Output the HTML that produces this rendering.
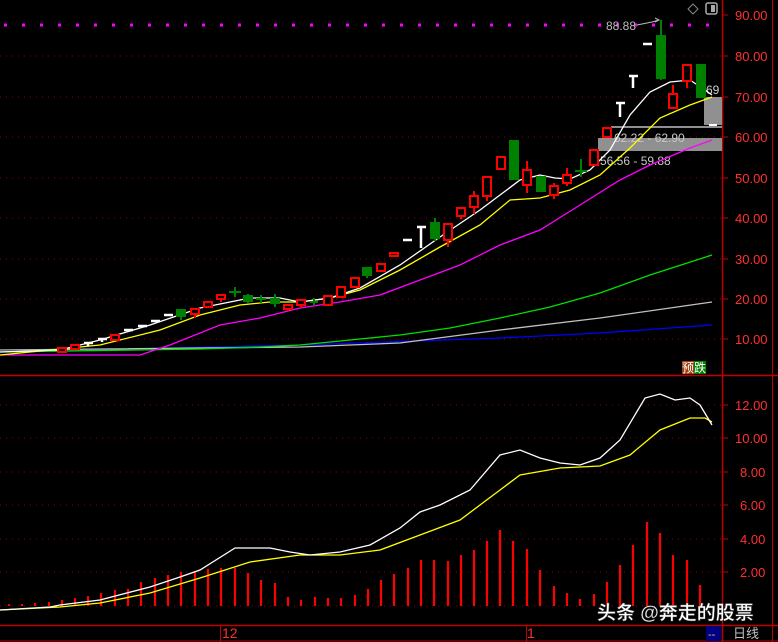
<!DOCTYPE html>
<html><head><meta charset="utf-8"><style>
html,body{margin:0;padding:0;background:#000;width:778px;height:642px;overflow:hidden}
svg{display:block}
text{font-family:"Liberation Sans","Noto Sans CJK SC",sans-serif}
</style></head><body>
<svg width="778" height="642" viewBox="0 0 778 642" xmlns="http://www.w3.org/2000/svg">
<rect width="778" height="642" fill="#000"/>
<g stroke="#8a0000" stroke-width="1" stroke-dasharray="1,5">
<line x1="0" y1="56" x2="722" y2="56"/><line x1="0" y1="97" x2="722" y2="97"/><line x1="0" y1="137" x2="722" y2="137"/><line x1="0" y1="178" x2="722" y2="178"/><line x1="0" y1="218" x2="722" y2="218"/><line x1="0" y1="259" x2="722" y2="259"/><line x1="0" y1="299" x2="722" y2="299"/><line x1="0" y1="339" x2="722" y2="339"/>
<line x1="0" y1="405" x2="722" y2="405"/><line x1="0" y1="438" x2="722" y2="438"/><line x1="0" y1="472" x2="722" y2="472"/><line x1="0" y1="505" x2="722" y2="505"/><line x1="0" y1="539" x2="722" y2="539"/><line x1="0" y1="572" x2="722" y2="572"/><line x1="0" y1="606" x2="722" y2="606"/>
</g>
<line x1="4" y1="25" x2="722" y2="25" stroke="#ff00ff" stroke-width="3" stroke-dasharray="3,15"/>
<line x1="0" y1="375.5" x2="778" y2="375.5" stroke="#c00000" stroke-width="1.5"/>
<line x1="722.5" y1="0" x2="722.5" y2="642" stroke="#c00000" stroke-width="1.5"/>
<line x1="772.5" y1="0" x2="772.5" y2="642" stroke="#c00000" stroke-width="1"/>
<line x1="0" y1="625.5" x2="778" y2="625.5" stroke="#c00000" stroke-width="1.5"/>
<line x1="0" y1="641" x2="778" y2="641" stroke="#c00000" stroke-width="1"/>
<g fill="#ff3030" font-size="13">
<text x="735" y="20">90.00</text><text x="735" y="61">80.00</text><text x="735" y="102">70.00</text><text x="735" y="142">60.00</text><text x="735" y="183">50.00</text><text x="735" y="223">40.00</text><text x="735" y="264">30.00</text><text x="735" y="304">20.00</text><text x="735" y="344">10.00</text>
<text x="735" y="410">12.00</text><text x="735" y="443">10.00</text><text x="740" y="477">8.00</text><text x="740" y="510">6.00</text><text x="740" y="544">4.00</text><text x="740" y="577">2.00</text>
<text x="222" y="638" font-size="14">12</text><text x="527" y="638" font-size="14">1</text>
</g>
<g stroke="#c00000" stroke-width="1">
<line x1="722" y1="15" x2="728" y2="15"/><line x1="722" y1="56" x2="728" y2="56"/><line x1="722" y1="97" x2="728" y2="97"/><line x1="722" y1="137" x2="728" y2="137"/><line x1="722" y1="178" x2="728" y2="178"/><line x1="722" y1="218" x2="728" y2="218"/><line x1="722" y1="259" x2="728" y2="259"/><line x1="722" y1="299" x2="728" y2="299"/><line x1="722" y1="339" x2="728" y2="339"/>
<line x1="722" y1="405" x2="728" y2="405"/><line x1="722" y1="438" x2="728" y2="438"/><line x1="722" y1="472" x2="728" y2="472"/><line x1="722" y1="505" x2="728" y2="505"/><line x1="722" y1="539" x2="728" y2="539"/><line x1="722" y1="572" x2="728" y2="572"/><line x1="722" y1="606" x2="728" y2="606"/>
<line x1="220.5" y1="625" x2="220.5" y2="642"/><line x1="526.5" y1="625" x2="526.5" y2="642"/>
</g>
<rect x="706" y="626" width="15" height="15" fill="#000080"/>
<text x="708" y="638" fill="#c0c0c0" font-size="11">--</text>
<text x="733" y="638" fill="#c0c0c0" font-size="13">日线</text>
<path d="M693 4 L698 9 L693 14 L688 9 Z" fill="none" stroke="#888" stroke-width="1"/>
<rect x="706" y="3" width="11" height="11" rx="2" fill="none" stroke="#aaa" stroke-width="1.5"/><rect x="711" y="5" width="4" height="7" fill="#aaa"/>
<rect x="598" y="138" width="124" height="13" fill="#909090"/>
<rect x="611" y="126" width="111" height="2" fill="#909090"/>
<rect x="704" y="97" width="18" height="28" fill="#909090"/>
<rect x="709" y="124" width="8" height="2" fill="#fff"/>
<text x="614" y="142" fill="#c8c8c8" font-size="12">62.22 - 62.90</text>
<text x="600" y="165" fill="#c8c8c8" font-size="12">56.56 - 59.88</text>
<text x="706" y="94" fill="#d0d0d0" font-size="12">69</text>
<text x="606" y="30" fill="#bbb" font-size="12">88.88</text>
<polyline points="637,25 652,22 659,20" fill="none" stroke="#bbb" stroke-width="1"/>
<path d="M655 18 L659 20 L655 22" fill="none" stroke="#bbb"/>
<g fill="none" stroke-width="1.3">
<polyline stroke="#0000ff" points="0,352 300,345 500,338 600,333 712,325"/>
<polyline stroke="#c0c0c0" points="0,350 300,347 400,343 500,330 600,318 712,302"/>
<polyline stroke="#00e000" points="0,352 200,349 260,347 300,345 350,340 400,335 450,328 500,318 550,307 600,293 650,275 712,255"/>
<polyline stroke="#ff00ff" points="0,355 140,355 170,345 220,325 260,318 300,308 340,302 380,295 420,280 460,265 500,245 540,230 580,205 620,180 650,165 690,148 712,140"/>
<polyline stroke="#ffff00" points="0,355 100,345 160,330 200,315 240,305 270,302 300,302 330,298 360,290 400,270 440,247 480,225 510,200 540,198 570,190 600,175 630,148 660,118 690,105 712,97"/>
<polyline stroke="#ffffff" points="0,352 60,350 100,340 150,325 200,308 250,298 280,298 300,302 330,298 360,288 400,265 440,237 480,210 500,195 520,180 540,175 555,178 570,179 590,170 610,150 630,115 650,92 670,82 690,80 705,90 712,95"/>
</g>
<g fill="#000" stroke="#ff0000" stroke-width="2">
<rect x="58" y="348" width="8" height="4"/><rect x="71" y="345" width="8" height="4"/><rect x="111" y="335" width="8" height="5"/>
<rect x="191" y="309" width="8" height="5"/><rect x="204" y="302" width="8" height="5"/><rect x="217" y="295" width="8" height="4"/>
<rect x="284" y="305" width="8" height="4"/><rect x="297" y="300" width="8" height="5"/><rect x="324" y="296" width="8" height="9"/><rect x="337" y="287" width="8" height="10"/><rect x="351" y="278" width="8" height="9"/>
<rect x="377" y="264" width="8" height="7"/><rect x="390" y="253" width="8" height="3"/>
<rect x="444" y="224" width="8" height="16"/><rect x="457" y="208" width="8" height="8"/><rect x="470" y="196" width="8" height="11"/><rect x="483" y="177" width="8" height="19"/><rect x="497" y="157" width="8" height="12"/>
<rect x="523" y="170" width="8" height="15"/><rect x="550" y="186" width="8" height="9"/><rect x="563" y="175" width="8" height="8"/><rect x="590" y="150" width="8" height="15"/><rect x="603" y="128" width="8" height="9"/>
<rect x="669" y="94" width="8" height="14"/><rect x="683" y="65" width="8" height="16"/>
</g>
<g stroke="#ff0000" stroke-width="2">
<line x1="195" y1="314" x2="195" y2="318"/><line x1="221" y1="299" x2="221" y2="302"/><line x1="288" y1="309" x2="288" y2="311"/><line x1="301" y1="305" x2="301" y2="308"/>
<line x1="448" y1="240" x2="448" y2="247"/><line x1="461" y1="216" x2="461" y2="219"/><line x1="474" y1="191" x2="474" y2="196"/><line x1="474" y1="207" x2="474" y2="214"/><line x1="487" y1="196" x2="487" y2="201"/>
<line x1="527" y1="161" x2="527" y2="170"/><line x1="527" y1="185" x2="527" y2="193"/><line x1="554" y1="183" x2="554" y2="186"/><line x1="554" y1="195" x2="554" y2="199"/><line x1="567" y1="168" x2="567" y2="175"/><line x1="567" y1="183" x2="567" y2="186"/>
<line x1="673" y1="85" x2="673" y2="94"/><line x1="687" y1="81" x2="687" y2="88"/>
</g>
<g fill="#008000" stroke="#008000" stroke-width="2">
<rect x="177" y="310" width="8" height="6"/><line x1="181" y1="316" x2="181" y2="320"/>
<line x1="229" y1="292" x2="241" y2="292"/><line x1="235" y1="287" x2="235" y2="297"/>
<rect x="244" y="296" width="8" height="5"/><line x1="248" y1="294" x2="248" y2="303"/>
<line x1="256" y1="299" x2="266" y2="299"/><line x1="261" y1="295" x2="261" y2="303"/>
<rect x="271" y="299" width="8" height="4"/><line x1="275" y1="294" x2="275" y2="307"/>
<line x1="310" y1="302" x2="318" y2="302"/><line x1="314" y1="298" x2="314" y2="305"/>
<rect x="363" y="268" width="8" height="7"/><line x1="367" y1="275" x2="367" y2="278"/>
<rect x="431" y="223" width="8" height="15"/><line x1="435" y1="218" x2="435" y2="241"/>
<rect x="510" y="141" width="8" height="38"/>
<rect x="537" y="177" width="8" height="14"/>
<line x1="575" y1="171" x2="587" y2="171"/><line x1="581" y1="159" x2="581" y2="177"/>
<rect x="657" y="36" width="8" height="42"/><line x1="661" y1="20" x2="661" y2="80"/>
<rect x="697" y="65" width="8" height="32"/>
</g>
<g stroke="#fff" stroke-width="2.5">
<line x1="84" y1="343" x2="93" y2="343"/><line x1="88" y1="343" x2="88" y2="346"/>
<line x1="98" y1="339" x2="107" y2="339"/><line x1="102" y1="339" x2="102" y2="342"/>
<line x1="124" y1="330" x2="133" y2="330"/><line x1="138" y1="326" x2="147" y2="326"/><line x1="151" y1="321" x2="160" y2="321"/><line x1="164" y1="315" x2="173" y2="315"/>
<line x1="403" y1="240" x2="412" y2="240"/>
<line x1="417" y1="227" x2="426" y2="227"/><line x1="421" y1="227" x2="421" y2="248"/>
<line x1="616" y1="103" x2="625" y2="103"/><line x1="620" y1="103" x2="620" y2="117"/>
<line x1="629" y1="76" x2="638" y2="76"/><line x1="633" y1="76" x2="633" y2="88"/>
<line x1="643" y1="44" x2="652" y2="44"/>
</g>
<rect x="682" y="361" width="12" height="13" fill="#a04010"/><rect x="694" y="361" width="12" height="13" fill="#008000"/>
<text x="682" y="372" fill="#fff" font-size="12">预跌</text>
<g stroke="#ff0000" stroke-width="2.2">
<line x1="9" y1="606" x2="9" y2="604"/><line x1="22" y1="606" x2="22" y2="604"/><line x1="35" y1="606" x2="35" y2="603"/><line x1="49" y1="606" x2="49" y2="602"/><line x1="62" y1="606" x2="62" y2="600"/><line x1="75" y1="606" x2="75" y2="598"/><line x1="88" y1="606" x2="88" y2="596"/><line x1="101" y1="606" x2="101" y2="593"/><line x1="115" y1="606" x2="115" y2="590"/><line x1="128" y1="606" x2="128" y2="589"/><line x1="141" y1="606" x2="141" y2="582"/><line x1="155" y1="606" x2="155" y2="578"/><line x1="168" y1="606" x2="168" y2="575"/><line x1="181" y1="606" x2="181" y2="572"/><line x1="195" y1="606" x2="195" y2="571"/><line x1="208" y1="606" x2="208" y2="569"/><line x1="221" y1="606" x2="221" y2="568"/><line x1="235" y1="606" x2="235" y2="568"/><line x1="248" y1="606" x2="248" y2="573"/><line x1="261" y1="606" x2="261" y2="580"/><line x1="275" y1="606" x2="275" y2="583"/><line x1="288" y1="606" x2="288" y2="597"/><line x1="301" y1="606" x2="301" y2="600"/><line x1="315" y1="606" x2="315" y2="597"/><line x1="328" y1="606" x2="328" y2="598"/><line x1="341" y1="606" x2="341" y2="598"/><line x1="355" y1="606" x2="355" y2="595"/><line x1="368" y1="606" x2="368" y2="589"/><line x1="381" y1="606" x2="381" y2="580"/><line x1="394" y1="606" x2="394" y2="574"/><line x1="408" y1="606" x2="408" y2="568"/><line x1="421" y1="606" x2="421" y2="560"/><line x1="434" y1="606" x2="434" y2="560"/><line x1="448" y1="606" x2="448" y2="561"/><line x1="461" y1="606" x2="461" y2="555"/><line x1="474" y1="606" x2="474" y2="550"/><line x1="487" y1="606" x2="487" y2="541"/><line x1="500" y1="606" x2="500" y2="530"/><line x1="513" y1="606" x2="513" y2="541"/><line x1="527" y1="606" x2="527" y2="549"/><line x1="540" y1="606" x2="540" y2="570"/><line x1="554" y1="606" x2="554" y2="586"/><line x1="567" y1="606" x2="567" y2="593"/><line x1="580" y1="606" x2="580" y2="599"/><line x1="594" y1="606" x2="594" y2="594"/><line x1="607" y1="606" x2="607" y2="582"/><line x1="620" y1="606" x2="620" y2="565"/><line x1="633" y1="606" x2="633" y2="545"/><line x1="647" y1="606" x2="647" y2="522"/><line x1="660" y1="606" x2="660" y2="533"/><line x1="673" y1="606" x2="673" y2="555"/><line x1="687" y1="606" x2="687" y2="560"/><line x1="700" y1="606" x2="700" y2="585"/>
</g>
<g fill="none" stroke-width="1.3">
<polyline stroke="#ffff00" points="0,610 60,607 100,603 150,593 200,578 250,562 300,555 340,555 380,550 420,535 460,520 500,490 520,475 560,468 600,466 630,455 660,430 690,418 705,418 712,422"/>
<polyline stroke="#ffffff" points="0,610 50,607 60,605 100,600 150,587 180,577 200,570 235,548 270,548 290,552 310,555 340,552 370,545 400,528 420,512 440,505 470,490 500,455 520,450 540,458 560,463 580,465 600,458 620,440 645,398 660,394 675,400 690,398 700,405 712,425"/>
</g>
<text x="597" y="619" fill="#fff" font-size="19" font-weight="bold" font-family="'Noto Sans CJK SC',sans-serif" stroke="#333" stroke-width="0.5">头条 @奔走的股票</text>
</svg>
</body></html>
